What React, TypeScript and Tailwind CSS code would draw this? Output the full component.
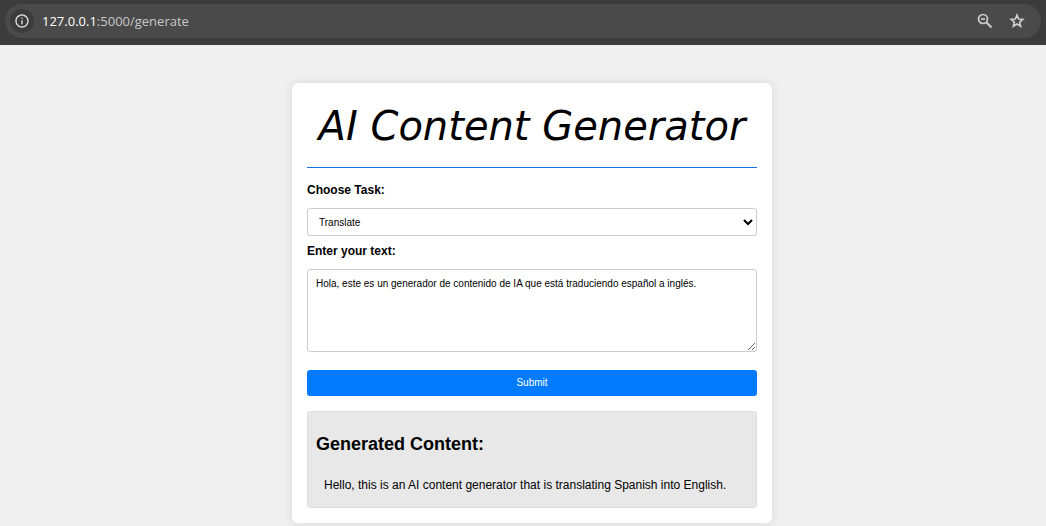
import { useState } from "react";
import { MdInfoOutline } from "react-icons/md";

function ZoomOutIcon() {
  return (
    <svg viewBox="0 0 18 18" className="size-[18px]" fill="none" stroke="currentColor" aria-hidden="true">
      <circle cx="7" cy="7" r="4.5" strokeWidth="1.7" />
      <path d="M5 7h4" strokeWidth="1.7" />
      <path d="M10.3 10.3l5.2 5.2" strokeWidth="2" />
    </svg>
  );
}

function StarIcon() {
  return (
    <svg viewBox="0 0 18 18" className="size-[18px]" fill="none" stroke="currentColor" aria-hidden="true">
      <path
        d="M9 3l1.65 3.95 4.25.36-3.22 2.8.97 4.15L9 12.05l-3.65 2.21.97-4.15L3.1 7.31l4.25-.36z"
        strokeWidth="1.6"
      />
    </svg>
  );
}

function AddressBar() {
  return (
    <header className="h-[45px] bg-[#3c3c3c] px-[5px] pt-1">
      <div className="flex h-[34px] items-center rounded-full bg-[#4a4a4a] pr-[15px] pl-[5px]">
        <button
          type="button"
          aria-label="Site information"
          className="flex size-6 items-center justify-center rounded-full bg-[#3c3c3c] text-[#dedede]"
        >
          <MdInfoOutline className="size-4" />
        </button>
        <span className="ml-2 flex-1 font-['Segoe_UI','Open_Sans',sans-serif] text-[13px] leading-5 text-[#c7c7c7]">
          <span className="text-white">127.0.0.1</span>:5000/generate
        </span>
        <div className="flex items-center gap-[14px] text-[#cfcfcf]">
          <button type="button" aria-label="Zoom">
            <ZoomOutIcon />
          </button>
          <button type="button" aria-label="Bookmark this page">
            <StarIcon />
          </button>
        </div>
      </div>
    </header>
  );
}

export default function App() {
  const [task, setTask] = useState("Translate");
  const [text, setText] = useState(
    "Hola, este es un generador de contenido de IA que está traduciendo español a inglés.",
  );

  return (
    <div className="flex min-h-screen flex-col bg-[#efefef] font-['Liberation_Sans',Arial,sans-serif] text-xs text-black">
      <AddressBar />
      <main className="flex flex-1 items-start justify-center pt-[38px] pr-4 pb-[3px] pl-[34px]">
        <section className="w-full max-w-[480px] rounded-md bg-white p-[15px] shadow-[0_0_8px_rgba(0,0,0,0.1)]">
          <h1 className="border-b border-[#1473e6] pt-1 pb-4 text-center font-['Lucida_Handwriting','DejaVu_Sans',cursive] text-[40px] leading-[49px] whitespace-nowrap italic">
            AI Content Generator
          </h1>
          <form onSubmit={(event) => event.preventDefault()}>
            <label htmlFor="task" className="mt-[14px] block leading-4 font-bold">
              Choose Task:
            </label>
            <select
              id="task"
              value={task}
              onChange={(event) => setTask(event.target.value)}
              className="mt-[10px] block h-7 w-full rounded-[3px] border border-[#cccccc] bg-white px-[7px] text-[10px]"
            >
              <option>Translate</option>
              <option>Summarize</option>
            </select>
            <label htmlFor="text" className="mt-[7px] block leading-4 font-bold">
              Enter your text:
            </label>
            <textarea
              id="text"
              value={text}
              onChange={(event) => setText(event.target.value)}
              className="mt-[10px] block h-[83px] w-full resize rounded-[3px] border border-[#cccccc] bg-white p-2 text-[10px] leading-3"
            />
            <button
              type="submit"
              className="mt-[18px] block h-[26px] w-full rounded-[3px] bg-[#007bff] text-[10px] text-white"
            >
              Submit
            </button>
          </form>
          <div className="mt-[15px] rounded-[3px] border border-[#dddddd] bg-[#e8e8e8] px-2 pt-[22px] pb-[14px]">
            <h2 className="text-lg leading-5 font-bold">Generated Content:</h2>
            <p className="mt-[23px] px-2 leading-4">
              Hello, this is an AI content generator that is translating Spanish into English.
            </p>
          </div>
        </section>
      </main>
    </div>
  );
}
